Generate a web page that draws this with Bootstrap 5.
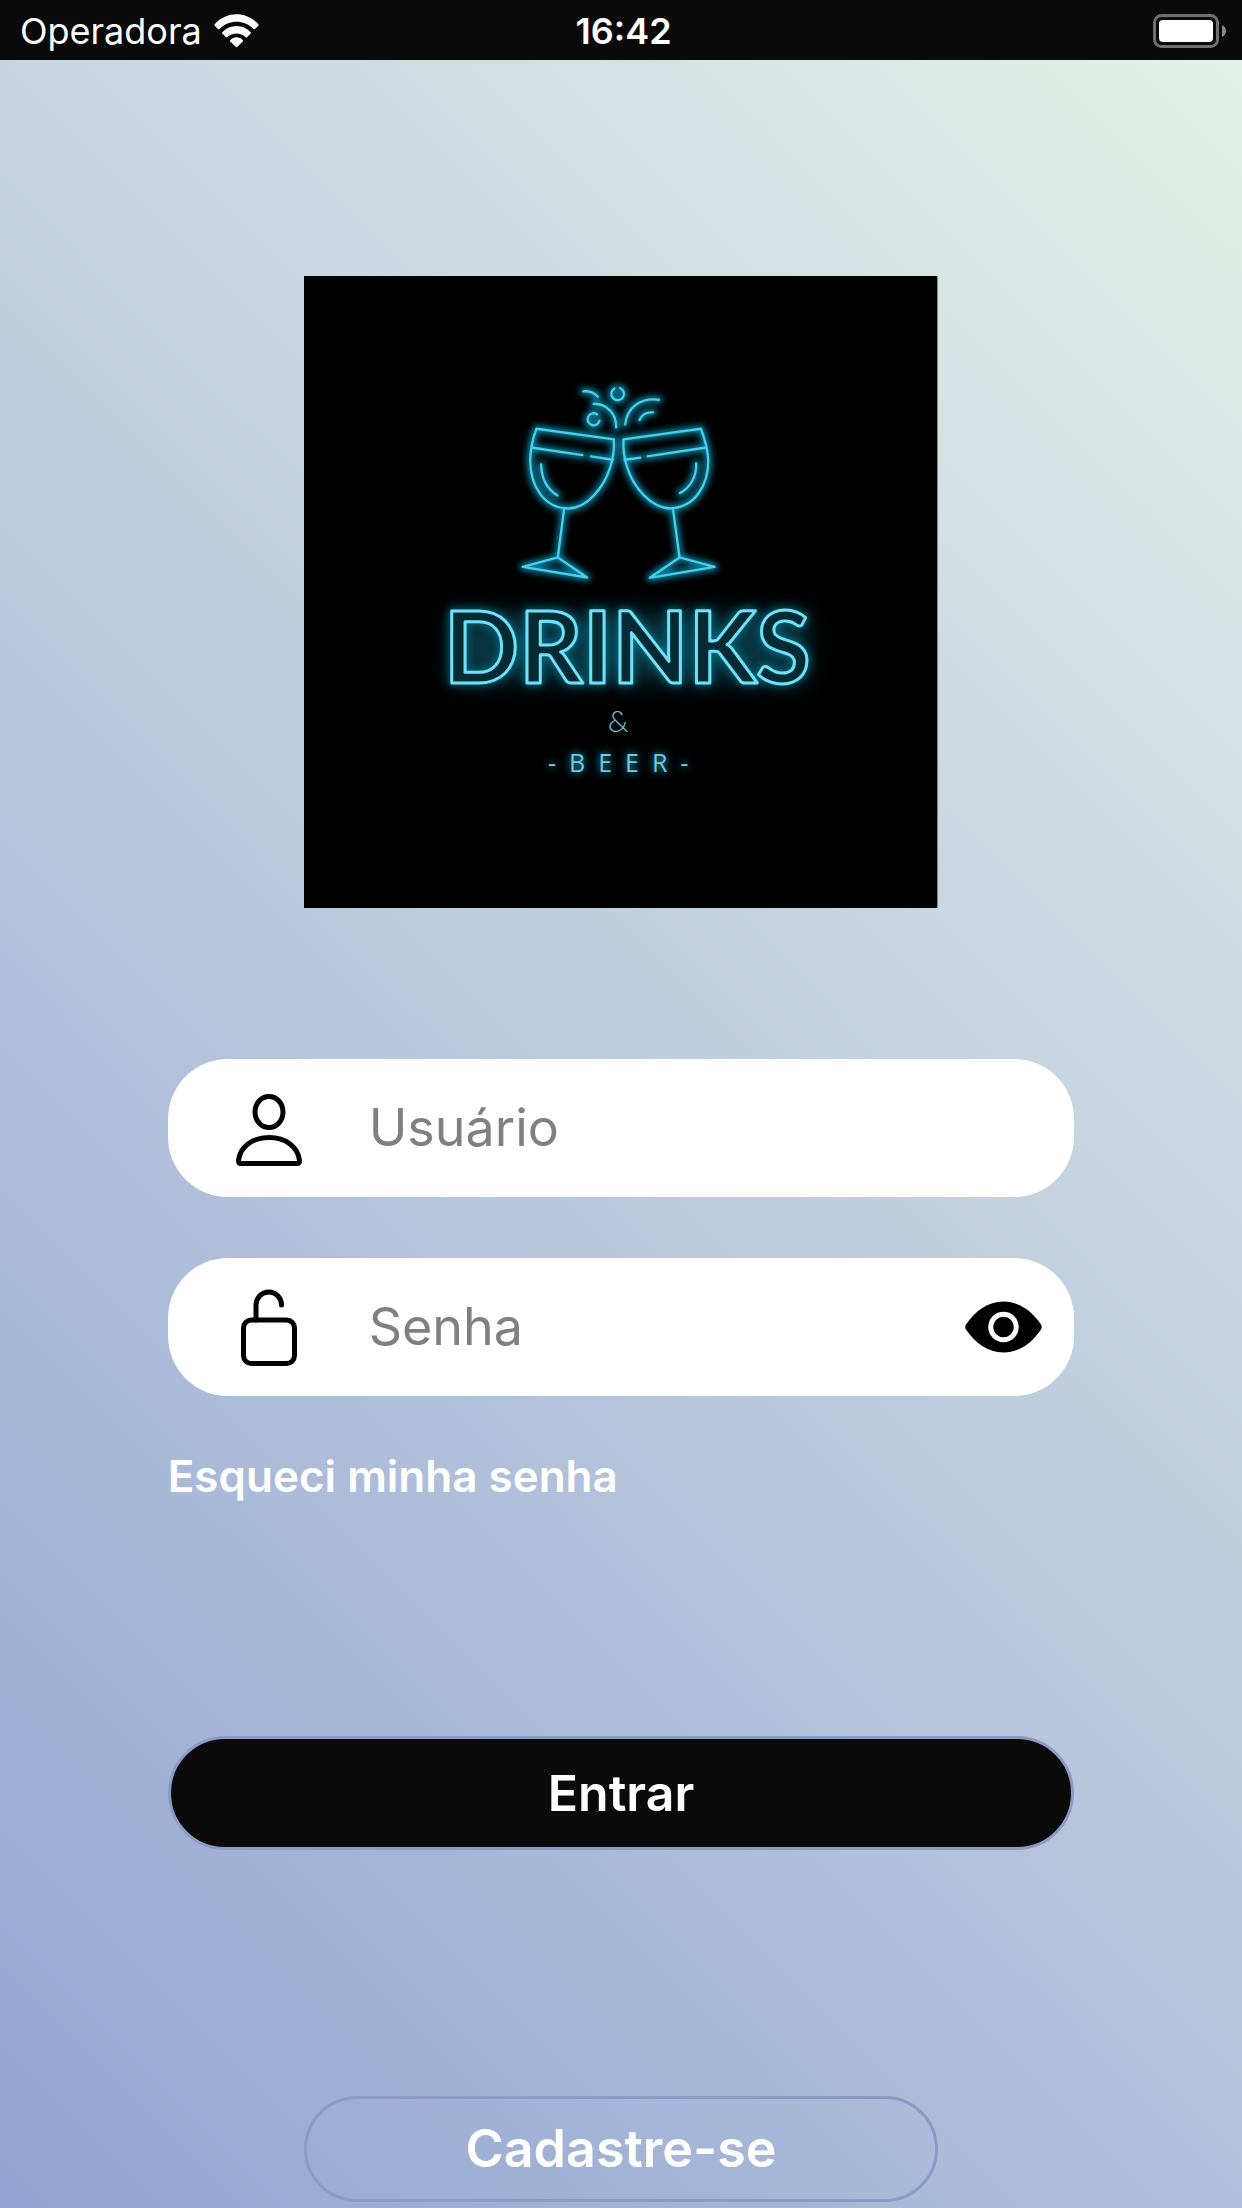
<!DOCTYPE html>
<html lang="pt-BR">
<head>
<meta charset="utf-8">
<meta name="viewport" content="width=device-width, initial-scale=1">
<title>Drinks &amp; Beer</title>
<link href="https://cdn.jsdelivr.net/npm/bootstrap@5.3.0/dist/css/bootstrap.min.css" rel="stylesheet">
<style>
  body {
    font-family: Inter, "Open Sans", sans-serif;
    background: #0a0a0a;
  }
  .status-bar {
    height: 60px;
    padding: 2px 15px 0 20px;
    background: #0a0a0a;
    color: #fff;
    font-size: 36px;
    line-height: 58px;
  }
  .carrier { gap: 12px; }
  .login-screen {
    background: linear-gradient(45deg, #93a4d2, #e4f1e8);
    padding: 216px 0 8px;
  }
  .brand-logo { width: 51%; margin-bottom: 151px; }
  .login-form { width: 73%; }
  .field-pill {
    height: 138px;
    padding: 0 32px 0 65px;
    gap: 64px;
    border-radius: 60px;
    background: #fff;
  }
  .field-pill + .field-pill { margin-top: 61px; }
  .field-pill .form-control { font-size: 52px; line-height: 76px; color: #0a0a0a; }
  .field-pill .form-control::placeholder { color: #808080; opacity: 1; }
  .forgot-link {
    margin-top: 48px;
    font-size: 44px;
    line-height: 64px;
  }
  .pill-btn {
    --bs-btn-color: #fff;
    --bs-btn-hover-color: #fff;
    --bs-btn-border-color: #8c9ac4;
    --bs-btn-hover-border-color: #8c9ac4;
    --bs-btn-border-width: 3px;
    --bs-btn-border-radius: 60px;
    --bs-btn-font-size: 52px;
    --bs-btn-line-height: 72px;
    --bs-btn-font-weight: 600;
  }
  .enter-btn {
    --bs-btn-bg: #0a0a0a;
    --bs-btn-hover-bg: #222;
    --bs-btn-font-size: 50px;
    --bs-btn-padding-y: 18px;
    margin-top: 228px;
  }
  .signup-btn { --bs-btn-padding-y: 14px; width: 51%; margin-top: 246px; }
</style>
</head>
<body>
<header class="status-bar row g-0 align-items-center">
  <div class="carrier col d-flex align-items-center">
    <span>Operadora</span>
    <svg width="45" height="34" viewBox="0 0 45 34" fill="#fff" aria-hidden="true">
      <path d="M.7 10.300C12.500-3 32.500-3 44.300 10.300Q45 11 44.300 11.700L41 15Q40.200 15.600 39.500 14.900C30 5.500 15 5.500 5.500 14.900Q4.800 15.600 4 15L.7 11.700Q0 11 .7 10.300Z"/>
      <path d="M8.300 18.300C16 9.800 29 9.800 36.700 18.300Q37.300 19 36.700 19.600L33 23.200Q32.400 23.700 31.800 23.200C26.500 18.300 18.500 18.300 13.200 23.200Q12.600 23.700 12 23.200L8.300 19.600Q7.700 19 8.300 18.300Z"/>
      <path d="M16.200 26.200C19.700 22.400 25.300 22.400 28.800 26.200Q29.400 26.900 28.800 27.500L23.200 33Q22.500 33.600 21.800 33L16.200 27.500Q15.600 26.900 16.200 26.200Z"/>
    </svg>
  </div>
  <time class="col-auto fw-semibold">16:42</time>
  <div class="col d-flex justify-content-end">
    <svg width="74" height="34" viewBox="0 0 74 34" aria-hidden="true">
      <rect x="1.500" y="1.500" width="63" height="31" rx="7" fill="none" stroke="#707070" stroke-width="3"/>
      <rect x="6" y="6" width="54" height="22" rx="4" fill="#fff"/>
      <path d="M69 11Q73 13 73 17T69 23Z" fill="#8a8a8a"/>
    </svg>
  </div>
</header>

<main class="login-screen d-flex flex-column align-items-center">
  <svg class="brand-logo" viewBox="0 0 633 632" role="img" aria-label="Drinks &amp; Beer">
    <defs>
      <filter id="neonGlow" x="-20%" y="-20%" width="140%" height="140%">
        <feGaussianBlur stdDeviation="4"/>
      </filter>
      <filter id="artGlow" x="-20%" y="-20%" width="140%" height="140%">
        <feGaussianBlur stdDeviation="9"/>
      </filter>
      <filter id="wideGlow" x="-20%" y="-60%" width="140%" height="220%">
        <feGaussianBlur stdDeviation="13"/>
      </filter>
      <g id="glasses" fill="none" stroke-linecap="round" stroke-linejoin="round">
        <path d="M109 176L341 208C343 240 340 262 330 292C312 350 262 414 205 415C130 415 90 345 90 270C91 235 98 205 109 176Z"/>
        <path d="M98 233L247 255M272 259L338 269M123 283C124 325 142 358 172 376"/>
        <path d="M192 415L173 562L68 590L261 622L173 562"/>
        <path d="M602 176L370 208C368 240 371 262 381 292C399 350 452 414 510 415C584 412 625 345 624 270C622 235 613 205 602 176Z"/>
        <path d="M612 233L442 259M420 263L373 269M588 280C589 320 570 353 539 369"/>
        <path d="M518 415L538 562L643 590L449 623L538 562"/>
        <path d="M249 64C268 62 282 68 293 80M280 101C320 101 349 130 348 172M375 163C380 112 420 82 476 89M418 150C425 133 439 125 459 127"/>
        <path d="M343 55A19 19 0 1 0 360 54M291 133A18 18 0 1 0 298 152"/>
      </g>
    </defs>
    <rect width="633" height="632" fill="#000"/>
    <rect x="148" y="338" width="354" height="66" fill="#07586c" opacity=".6" filter="url(#wideGlow)"/>
    <g transform="translate(196 94) scale(.3333)">
      <use href="#glasses" stroke="#0b9cc0" stroke-width="22" filter="url(#artGlow)" opacity=".8"/>
      <use href="#glasses" stroke="#45d0ec" stroke-width="7"/>
    </g>
    <g font-family="Lato, sans-serif" text-anchor="middle">
      <g font-size="99" font-weight="700" stroke-linejoin="round">
        <text x="323" y="407" fill="none" stroke="#0b9cc0" stroke-width="5" filter="url(#neonGlow)" opacity=".7" aria-hidden="true">DRINKS</text>
        <text x="323" y="407" fill="#042a34" stroke="#6fe0f5" stroke-width="3">DRINKS</text>
      </g>
      <text x="314" y="456" font-size="30" font-weight="300" fill="#6cc4d8">&amp;</text>
      <g font-family="Open Sans, sans-serif" font-size="25">
        <text x="314" y="496" fill="#0b9cc0" stroke="#0b9cc0" stroke-width="1" filter="url(#neonGlow)" aria-hidden="true">-&nbsp;&nbsp;B&nbsp;&nbsp;E&nbsp;&nbsp;E&nbsp;&nbsp;R&nbsp;&nbsp;-</text>
        <text x="314" y="496" fill="#7cc6d8">-&nbsp;&nbsp;B&nbsp;&nbsp;E&nbsp;&nbsp;E&nbsp;&nbsp;R&nbsp;&nbsp;-</text>
      </g>
    </g>
  </svg>

  <form class="login-form d-flex flex-column">
    <div class="field-pill d-flex align-items-center">
      <label for="usuario" class="d-flex" aria-label="Usuário">
        <svg width="72" height="78" viewBox="0 -1 72 78" fill="none" stroke="#000" stroke-width="5" aria-hidden="true">
          <ellipse cx="36" cy="22" rx="14" ry="15.500"/>
          <path d="M8 73.500H64Q66.500 73.500 66.500 70.500C65 57 53 47.500 36 47.500S7 57 5.500 70.500Q5.500 73.500 8 73.500Z"/>
        </svg>
      </label>
      <input id="usuario" type="text" class="form-control border-0 bg-transparent shadow-none p-0" placeholder="Usuário">
    </div>
    <div class="field-pill d-flex align-items-center">
      <label for="senha" class="d-flex" aria-label="Senha">
        <svg width="72" height="78" viewBox="0 0 72 78" fill="none" stroke="#000" stroke-width="5" stroke-linecap="round" aria-hidden="true">
          <rect x="10.500" y="32" width="51" height="43.500" rx="8"/>
          <path d="M23 32V17A12.750 13 0 0 1 48.500 17"/>
        </svg>
      </label>
      <input id="senha" type="password" class="form-control border-0 bg-transparent shadow-none p-0" placeholder="Senha">
      <button type="button" class="btn border-0 p-0 d-flex" aria-label="Mostrar senha">
        <svg width="77" height="52" viewBox="0 0 77 52" aria-hidden="true">
          <path d="M1 23.500C10 10 23 .5 38.500 .5S67 10 76 23.500Q77.500 26 76 28.500C67 42 54 51.500 38.500 51.500S10 42 1 28.500Q-.5 26 1 23.500Z"/>
          <circle cx="38.500" cy="26" r="12.800" fill="none" stroke="#fff" stroke-width="5"/>
        </svg>
      </button>
    </div>
    <a href="#" class="forgot-link align-self-start fw-semibold text-white text-decoration-none">Esqueci minha senha</a>
    <button type="submit" class="btn pill-btn enter-btn w-100">Entrar</button>
  </form>
  <button type="button" class="btn pill-btn signup-btn">Cadastre-se</button>
</main>
<script src="https://cdn.jsdelivr.net/npm/bootstrap@5.3.0/dist/js/bootstrap.bundle.min.js"></script>
</body>
</html>
